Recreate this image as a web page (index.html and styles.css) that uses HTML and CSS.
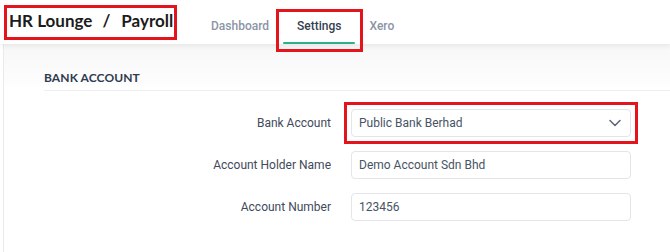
FILE: index.html
```html
<!DOCTYPE html>
<html>
<head>
<meta charset="utf-8">
<link rel="stylesheet" href="styles.css">
</head>
<body>
<header class="topbar">
  <div class="brand">HR Lounge<span class="sep">/</span>Payroll</div>
  <nav class="tabs">
    <a class="tab">Dashboard</a>
    <a class="tab active">Settings</a>
    <a class="tab">Xero</a>
  </nav>
</header>
<main class="page">
  <section class="card">
    <h2 class="section-title">BANK ACCOUNT</h2>
    <div class="form">
      <div class="row">
        <label class="label">Bank Account</label>
        <div class="field select highlighted">
          <span>Public Bank Berhad</span>
          <svg class="chev" width="12" height="8" viewBox="0 0 12 8"><path d="M1 1.5 L6 6.5 L11 1.5" fill="none" stroke="#5b6575" stroke-width="1.5" stroke-linecap="round" stroke-linejoin="round"/></svg>
        </div>
      </div>
      <div class="row">
        <label class="label">Account Holder Name</label>
        <div class="field">Demo Account Sdn Bhd</div>
      </div>
      <div class="row">
        <label class="label">Account Number</label>
        <div class="field">123456</div>
      </div>
    </div>
  </section>
</main>
</body>
</html>
```
FILE: styles.css
```css
* { box-sizing: border-box; }
html, body { margin: 0; padding: 0; }
body {
  width: 670px;
  height: 252px;
  overflow: hidden;
  background: #ffffff;
  font-family: Roboto, "Liberation Sans", sans-serif;
  color: #3d4757;
}
.topbar {
  position: relative;
  z-index: 2;
  height: 44px;
  display: flex;
  align-items: flex-end;
  background: #fff;
  box-shadow: 0 2px 5px rgba(0,0,0,0.07);
}
.brand {
  align-self: flex-start;
  margin: 5px 0 0 4px;
  height: 35px;
  padding: 0 0 0 2px;
  width: 173px;
  border: 3px solid #e3141c;
  font-family: Lato, "Open Sans", sans-serif;
  font-weight: 700;
  font-size: 17px;
  line-height: 26px;
  color: #1c1c1c;
  white-space: nowrap;
}
.sep {
  margin: 0 11px 0 10px;
}
.tabs {
  display: flex;
  margin-left: 20px;
  height: 44px;
}
.tab {
  position: relative;
  padding: 12px 14px 0;
  font-size: 12px;
  font-weight: 500;
  line-height: 28px;
  color: #8b95a5;
  white-space: nowrap;
}
.tab.active {
  color: #343f50;
}
.tab.active::before {
  content: "";
  position: absolute;
  left: 0;
  right: 0;
  bottom: 0;
  height: 2px;
  border-radius: 2px;
  background: #2bb08a;
}
.tab.active::after {
  content: "";
  position: absolute;
  left: -7px;
  right: -8px;
  top: 9px;
  bottom: -8px;
  border: 3px solid #e3141c;
}
.page {
  padding-left: 3px;
  height: 208px;
}
.card {
  height: 100%;
  border-left: 1px solid #ece9e7;
  background: linear-gradient(#f7f7f7, #fdfdfd 40px, #fff 44px);
}
.section-title {
  margin: 0 0 0 40px;
  padding-top: 27px;
  height: 47px;
  border-bottom: 1px solid #efefef;
  font-family: Lato, "Open Sans", sans-serif;
  font-weight: 700;
  font-size: 12px;
  line-height: 14px;
  color: #2e3b50;
  letter-spacing: 0.1px;
}
.form {
  padding-top: 18px;
  display: flex;
  flex-direction: column;
  gap: 14px;
}
.row {
  display: flex;
  align-items: center;
  gap: 20px;
  height: 28px;
}
.label {
  width: 327px;
  text-align: right;
  font-size: 12px;
  color: #3f4a5b;
}
.field {
  position: relative;
  width: 280px;
  height: 28px;
  border: 1px solid #e2e5e9;
  border-radius: 4px;
  padding: 0 7px;
  display: flex;
  align-items: center;
  justify-content: space-between;
  font-size: 12px;
  color: #485364;
}
.highlighted::after {
  content: "";
  position: absolute;
  left: -8px;
  right: -8px;
  top: -8px;
  bottom: -8px;
  border: 3px solid #e3141c;
}
.chev { margin-right: 2px; }
```
